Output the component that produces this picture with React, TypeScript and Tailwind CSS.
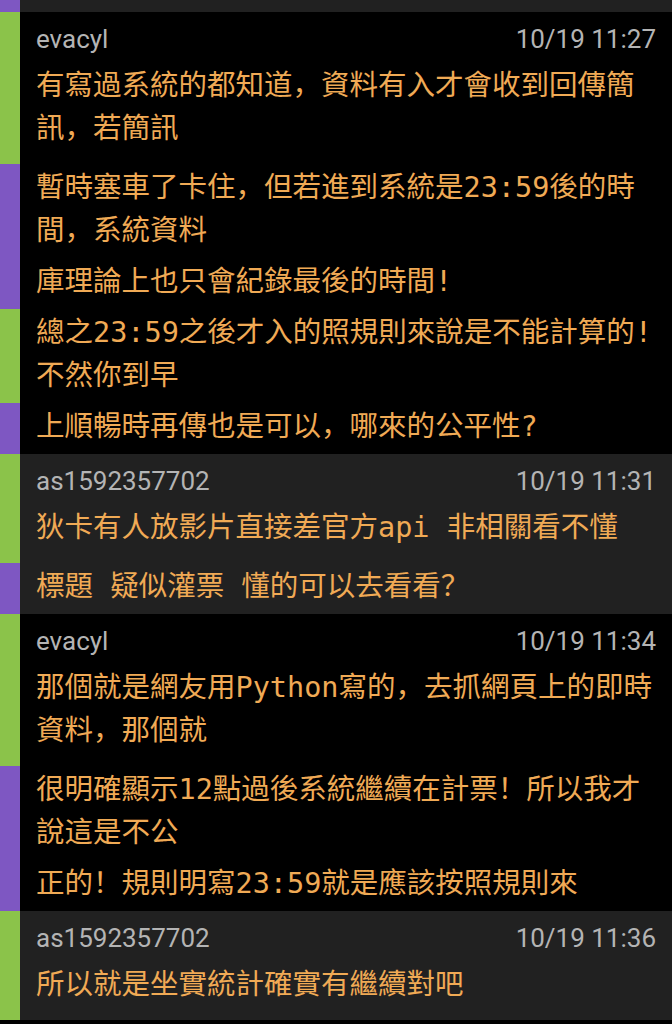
type Line = { color: "green" | "purple"; text: string };

type Post = {
  user: string;
  time: string;
  bg: "black" | "gray";
  lines: Line[];
};

const posts: Post[] = [
  {
    user: "evacyl",
    time: "10/19 11:27",
    bg: "black",
    lines: [
      { color: "green", text: "有寫過系統的都知道，資料有入才會收到回傳簡訊，若簡訊" },
      { color: "purple", text: "暫時塞車了卡住，但若進到系統是23:59後的時間，系統資料" },
      { color: "purple", text: "庫理論上也只會紀錄最後的時間!" },
      { color: "green", text: "總之23:59之後才入的照規則來說是不能計算的!不然你到早" },
      { color: "purple", text: "上順暢時再傳也是可以，哪來的公平性?" },
    ],
  },
  {
    user: "as1592357702",
    time: "10/19 11:31",
    bg: "gray",
    lines: [
      { color: "green", text: "狄卡有人放影片直接差官方api 非相關看不懂" },
      { color: "purple", text: "標題 疑似灌票 懂的可以去看看？" },
    ],
  },
  {
    user: "evacyl",
    time: "10/19 11:34",
    bg: "black",
    lines: [
      { color: "green", text: "那個就是網友用Python寫的，去抓網頁上的即時資料，那個就" },
      { color: "purple", text: "很明確顯示12點過後系統繼續在計票！所以我才說這是不公" },
      { color: "purple", text: "正的！規則明寫23:59就是應該按照規則來" },
    ],
  },
  {
    user: "as1592357702",
    time: "10/19 11:36",
    bg: "gray",
    lines: [{ color: "green", text: "所以就是坐實統計確實有繼續對吧" }],
  },
];

const bodyFont = {
  fontFamily: '"DejaVu Sans Mono", "Noto Sans CJK SC", monospace',
};

function Bar({ color }: { color: "green" | "purple" }) {
  return (
    <div
      className={
        color === "green"
          ? "w-[20px] shrink-0 bg-[#8bc34a]"
          : "w-[20px] shrink-0 bg-[#7e57c2]"
      }
    />
  );
}

function PostBlock({ post }: { post: Post }) {
  return (
    <div className={post.bg === "gray" ? "bg-[#212121]" : "bg-black"}>
      {post.lines.map((line, i) => (
        <div key={i} className="flex">
          <Bar color={line.color} />
          <div
            className={
              i === 0
                ? "flex-1 min-w-0 pl-[16px] pr-[16px] pt-[12px] pb-[14px]"
                : "flex-1 min-w-0 pl-[16px] pr-[16px] pt-[2px] pb-[6px]"
            }
          >
            {i === 0 && (
              <div className="flex justify-between items-center font-['Roboto',sans-serif] text-[26px] leading-[30px] text-[#b4b4b4] mb-[10px]">
                <span>{post.user}</span>
                <span>{post.time}</span>
              </div>
            )}
            <p
              className="text-[28.5px] leading-[43px] text-[#f0aa55]"
              style={bodyFont}
            >
              {line.text}
            </p>
          </div>
        </div>
      ))}
    </div>
  );
}

export default function App() {
  return (
    <div className="h-[1024px] w-[672px] overflow-hidden bg-black">
      {/* tail of the previous post */}
      <div className="flex h-[12px] bg-[#212121]">
        <Bar color="purple" />
      </div>

      {posts.map((post, i) => (
        <PostBlock key={i} post={post} />
      ))}
    </div>
  );
}
